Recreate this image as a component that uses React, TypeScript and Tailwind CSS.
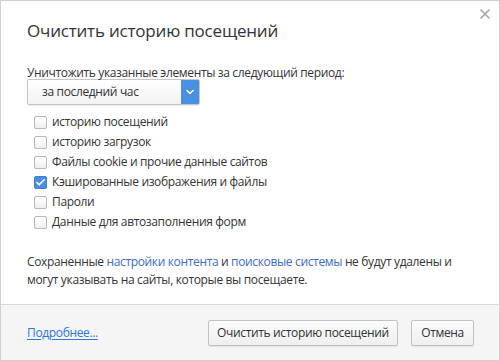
import { Check, ChevronDown, X } from "lucide-react";

const items = [
    { label: "историю посещений", checked: false },
    { label: "историю загрузок", checked: false },
    { label: "Файлы cookie и прочие данные сайтов", checked: false },
    { label: "Кэшированные изображения и файлы", checked: true },
    { label: "Пароли", checked: false },
    { label: "Данные для автозаполнения форм", checked: false },
];

export default function App() {
    return (
        <div
            className="w-[500px] h-[361px] bg-white border border-[#d0d0d0] flex flex-col text-[#333] text-[12px] tracking-[-0.35px]"
            style={{ fontFamily: '"Open Sans", "Noto Sans", sans-serif' }}
        >
            {/* Body */}
            <div className="relative flex-1 pl-[26px] pr-4">
                <button className="absolute top-[5px] right-[6px] text-[#a8a8a8]">
                    <X size={16} strokeWidth={2.6} />
                </button>

                <h1 className="mt-[17px] text-[17px] tracking-[-0.2px] leading-[26px] text-[#333]">
                    Очистить историю посещений
                </h1>

                <div className="mt-[22px] leading-[14px]">Уничтожить указанные элементы за следующий период:</div>

                <div className="mt-[-1px] w-[173px] h-[26px] flex items-stretch border border-[#c6c6c6] rounded-[2px] bg-gradient-to-b from-white to-[#f3f3f3] shadow-[0_1px_1px_rgba(0,0,0,0.08)]">
                    <span className="flex-1 pl-[14px] leading-[24px]">за последний час</span>
                    <span className="w-[18px] bg-[#4a90e2] flex items-center justify-center text-white rounded-r-[1px]">
                        <ChevronDown size={12} strokeWidth={3} />
                    </span>
                </div>

                <div className="mt-[7px] pl-[7px] flex flex-col">
                    {items.map((item) => (
                        <label key={item.label} className="h-[20px] flex items-center gap-[5px]">
                            {item.checked ? (
                                <span className="w-[13px] h-[13px] rounded-[2px] bg-[#4a8fe0] border border-[#3d7fd1] flex items-center justify-center text-white">
                                    <Check size={11} strokeWidth={3.5} />
                                </span>
                            ) : (
                                <span className="w-[13px] h-[13px] rounded-[2px] border border-[#b8b8b8] bg-gradient-to-b from-white to-[#f0f0f0]" />
                            )}
                            <span>{item.label}</span>
                        </label>
                    ))}
                </div>

                <p className="mt-[21px] leading-[18px] whitespace-nowrap">
                    Сохраненные <span className="text-[#3a6bd1]">настройки контента</span> и{" "}
                    <span className="text-[#3a6bd1]">поисковые системы</span> не будут удалены и
                    <br />
                    могут указывать на сайты, которые вы посещаете.
                </p>
            </div>

            {/* Footer */}
            <div className="h-[56px] bg-[#f5f5f5] border-t border-[#d8d8d8] flex items-center pl-[26px] pr-[25px]">
                <a className="text-[#2a78e4] underline underline-offset-2 mr-auto">Подробнее...</a>
                <button className="h-[26px] w-[190px] border border-[#c2c2c2] rounded-[2px] bg-gradient-to-b from-[#fbfbfb] to-[#efefef] shadow-[0_1px_1px_rgba(0,0,0,0.08)] text-[#333]">
                    Очистить историю посещений
                </button>
                <button className="ml-[13px] h-[26px] w-[63px] border border-[#c2c2c2] rounded-[2px] bg-gradient-to-b from-[#fbfbfb] to-[#efefef] shadow-[0_1px_1px_rgba(0,0,0,0.08)] text-[#333]">
                    Отмена
                </button>
            </div>
        </div>
    );
}
